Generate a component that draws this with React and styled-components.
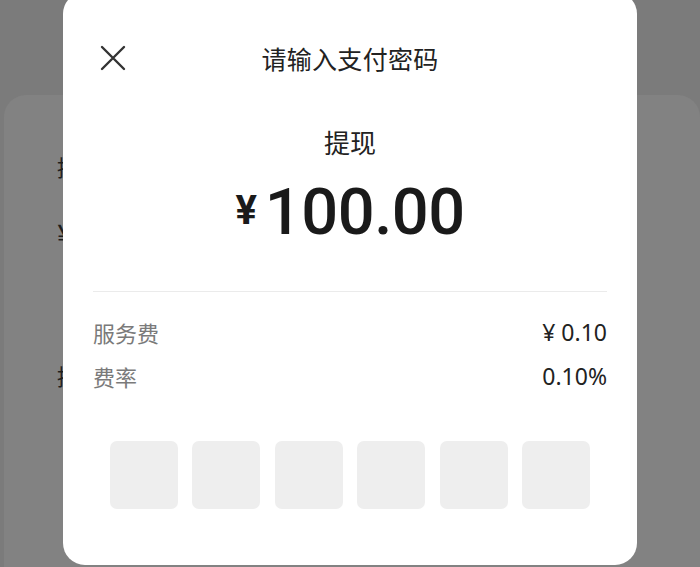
import React from "react";
import styled, { createGlobalStyle } from "styled-components";

const Global = createGlobalStyle`
  html, body { margin: 0; padding: 0; }
  body {
    width: 700px; height: 567px; overflow: hidden;
    background: #7b7b7b;
    font-family: "Noto Sans CJK SC", "Noto Sans", sans-serif;
  }
`;

const Page = styled.div`
  position: relative;
  width: 700px;
  height: 567px;
  overflow: hidden;
  display: flex;
  flex-direction: column;
`;

const TopBar = styled.div`
  height: 95px;
  flex: none;
`;

const Sheet = styled.div`
  flex: 1;
  margin-left: 4px;
  background: #828282;
  border-radius: 22px 22px 0 0;
  padding: 56px 53px;
  color: #1e1e1e;
  display: flex;
  flex-direction: column;
  align-items: flex-start;
`;

const SheetText = styled.div`
  font-size: ${(p) => p.$size || 22}px;
  line-height: 1.4;
  margin-top: ${(p) => p.$gap || 0}px;
`;

const Modal = styled.div`
  position: absolute;
  left: 63px;
  top: -8px;
  width: 574px;
  height: 573px;
  background: #fff;
  border-radius: 22px;
  box-sizing: border-box;
  padding: 0 30px;
  display: flex;
  flex-direction: column;
`;

const Header = styled.div`
  margin-top: 42px;
  height: 48px;
  display: grid;
  grid-template-columns: 1fr auto 1fr;
  align-items: center;
`;

const CloseBtn = styled.button`
  justify-self: start;
  margin-left: 6px;
  width: 28px;
  height: 28px;
  padding: 0;
  border: none;
  background: none;
  display: flex;
  align-items: center;
  justify-content: center;
`;

const Title = styled.div`
  font-size: 25px;
  color: #222;
  letter-spacing: 0.3px;
`;

const Label = styled.div`
  margin-top: 42px;
  text-align: center;
  font-size: 26px;
  line-height: 36px;
  color: #222;
`;

const Amount = styled.div`
  margin-top: 14px;
  height: 76px;
  display: flex;
  align-items: baseline;
  justify-content: center;
  color: #1a1a1a;
  font-family: Roboto, "Liberation Sans", sans-serif;
`;

const Currency = styled.span`
  font-size: 40px;
  font-weight: 700;
  margin-right: 8px;
  position: relative;
  top: -10px;
`;

const Digits = styled.span`
  font-size: 65px;
  font-weight: 500;
  line-height: 76px;
  letter-spacing: -0.5px;
`;

const Divider = styled.div`
  margin-top: 41px;
  height: 1px;
  background: #ebebeb;
`;

const Rows = styled.div`
  margin-top: 18px;
  display: flex;
  flex-direction: column;
`;

const Row = styled.div`
  display: flex;
  justify-content: space-between;
  align-items: center;
  height: 44px;
  font-size: 22px;
`;

const RowLabel = styled.span`
  color: #7a7a7a;
`;

const RowValue = styled.span`
  color: #222;
  font-size: 23px;
  font-family: "Noto Sans", Roboto, sans-serif;
`;

const Boxes = styled.div`
  margin-top: 43px;
  display: flex;
  justify-content: center;
  gap: 14.4px;
`;

const Box = styled.div`
  width: 68px;
  height: 68px;
  border-radius: 7px;
  background: #eeeeee;
`;

export default function App() {
  return (
    <>
      <Global />
      <Page>
        <TopBar />
        <Sheet>
          <SheetText>提</SheetText>
          <SheetText $size={30} $gap={30}>¥</SheetText>
          <SheetText $gap={106}>提</SheetText>
        </Sheet>
        <Modal>
          <Header>
            <CloseBtn aria-label="关闭">
              <svg width="26" height="26" viewBox="0 0 26 26">
                <path d="M2 2 L24 24 M24 2 L2 24" stroke="#333" strokeWidth="2.4" strokeLinecap="round" />
              </svg>
            </CloseBtn>
            <Title>请输入支付密码</Title>
            <span />
          </Header>
          <Label>提现</Label>
          <Amount>
            <Currency>¥</Currency>
            <Digits>100.00</Digits>
          </Amount>
          <Divider />
          <Rows>
            <Row>
              <RowLabel>服务费</RowLabel>
              <RowValue>¥ 0.10</RowValue>
            </Row>
            <Row>
              <RowLabel>费率</RowLabel>
              <RowValue>0.10%</RowValue>
            </Row>
          </Rows>
          <Boxes>
            {[0, 1, 2, 3, 4, 5].map((i) => (
              <Box key={i} />
            ))}
          </Boxes>
        </Modal>
      </Page>
    </>
  );
}
